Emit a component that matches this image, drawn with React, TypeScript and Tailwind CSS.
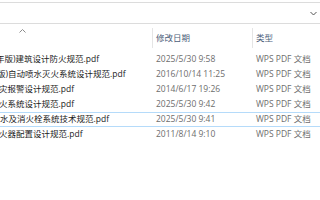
import React from "react";

type Row = {
  name: string;
  shift: string;
  date: string;
  focus?: boolean;
};

const rows: Row[] = [
  { name: "年版)建筑设计防火规范.pdf", shift: "-ml-[4px]", date: "2025/5/30 9:58" },
  { name: "版)自动喷水灭火系统设计规范.pdf", shift: "-ml-[3px]", date: "2016/10/14 11:25" },
  { name: "灾报警设计规范.pdf", shift: "-ml-[1px]", date: "2014/6/17 19:26" },
  { name: "火系统设计规范.pdf", shift: "-ml-[1px]", date: "2025/5/30 9:42" },
  { name: "水及消火栓系统技术规范.pdf", shift: "ml-0", date: "2025/5/30 9:41", focus: true },
  { name: "火器配置设计规范.pdf", shift: "-ml-[1px]", date: "2011/8/14 9:10" },
];

export default function App() {
  return (
    <div
      className="w-[320px] h-[200px] bg-white overflow-hidden text-[8.5px] leading-none"
      style={{ fontFamily: '"Open Sans", "Noto Sans CJK SC", sans-serif' }}
    >
      <div className="h-[2px]" />
      {/* address / search box */}
      <div className="h-[22px] border-y border-[#dcdcdc] flex items-center justify-end pr-[3px]">
        <svg width="7" height="5" viewBox="0 0 7 5" className="mt-[1px]">
          <path d="M0.5 1 L3.5 4 L6.5 1" fill="none" stroke="#555" strokeWidth="1" />
        </svg>
      </div>
      <div className="h-[4px]" />

      {/* column header */}
      <div className="h-[20px] flex text-[#4c607a]">
        <div className="w-[153px] border-r border-[#e5e5e5] relative shrink-0">
          <svg
            width="7"
            height="4"
            viewBox="0 0 7 4"
            className="absolute left-[19px] top-[1px]"
          >
            <path d="M0.5 3.5 L3.5 0.5 L6.5 3.5" fill="none" stroke="#8c8c8c" strokeWidth="1" />
          </svg>
        </div>
        <div className="w-[100px] border-r border-[#e5e5e5] pl-[3px] flex items-center shrink-0">
          修改日期
        </div>
        <div className="pl-[3px] flex items-center">类型</div>
      </div>
      <div className="h-[4px]" />

      {/* file rows */}
      <div className="flex flex-col">
        {rows.map((r) => (
          <div
            key={r.name}
            className={`h-[15px] flex items-center ${r.focus ? "border-y border-[#b5dbfa]" : ""}`}
          >
            <div className="w-[153px] shrink-0 overflow-hidden whitespace-nowrap text-[#1a1a1a]">
              <span className={`inline-block ${r.shift}`}>{r.name}</span>
            </div>
            <div className="w-[100px] shrink-0 pl-[3px] text-[#6d6d6d] whitespace-nowrap">
              {r.date}
            </div>
            <div className="pl-[3px] text-[#6d6d6d] whitespace-nowrap">WPS PDF 文档</div>
          </div>
        ))}
      </div>
    </div>
  );
}
